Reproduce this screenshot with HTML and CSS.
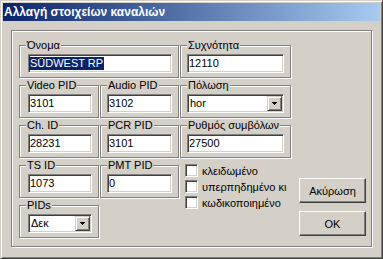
FILE: index.html
```html
<!DOCTYPE html>
<html lang="el">
<head>
    <meta charset="UTF-8">
    <title>Αλλαγή στοιχείων καναλιών</title>
    <link rel="stylesheet" href="styles.css">
</head>
<body>
    <div class="window">
        <div class="titlebar">Αλλαγή στοιχείων καναλιών</div>
        <div class="frame">
            <div class="fields">
                <div class="group lead wide">
                    <span class="legend">Όνομα</span>
                    <div class="edit"><span class="sel">SÜDWEST RP</span></div>
                </div>
                <div class="group">
                    <span class="legend">Συχνότητα</span>
                    <div class="edit">12110</div>
                </div>

                <div class="group lead">
                    <span class="legend">Video PID</span>
                    <div class="edit">3101</div>
                </div>
                <div class="group">
                    <span class="legend">Audio PID</span>
                    <div class="edit">3102</div>
                </div>
                <div class="group">
                    <span class="legend">Πόλωση</span>
                    <div class="combo">
                        <span class="value">hor</span>
                        <span class="drop"><svg width="5" height="3" viewBox="0 0 5 3" shape-rendering="crispEdges"><rect x="0" y="0" width="5" height="1"/><rect x="1" y="1" width="3" height="1"/><rect x="2" y="2" width="1" height="1"/></svg></span>
                    </div>
                </div>

                <div class="group lead">
                    <span class="legend">Ch. ID</span>
                    <div class="edit">28231</div>
                </div>
                <div class="group">
                    <span class="legend">PCR PID</span>
                    <div class="edit">3101</div>
                </div>
                <div class="group">
                    <span class="legend">Ρυθμός συμβόλων</span>
                    <div class="edit">27500</div>
                </div>

                <div class="group lead">
                    <span class="legend">TS ID</span>
                    <div class="edit">1073</div>
                </div>
                <div class="group">
                    <span class="legend">PMT PID</span>
                    <div class="edit">0</div>
                </div>
                <div class="checks">
                    <label class="check"><span class="box"></span>κλειδωμένο</label>
                    <label class="check"><span class="box"></span>υπερπηδημένο κι</label>
                    <label class="check"><span class="box"></span>κωδικοποιημένο</label>
                </div>

                <div class="group lead">
                    <span class="legend">PIDs</span>
                    <div class="combo">
                        <span class="value">Δεκ</span>
                        <span class="drop"><svg width="5" height="3" viewBox="0 0 5 3" shape-rendering="crispEdges"><rect x="0" y="0" width="5" height="1"/><rect x="1" y="1" width="3" height="1"/><rect x="2" y="2" width="1" height="1"/></svg></span>
                    </div>
                </div>
            </div>

            <div class="actions">
                <button class="btn">Ακύρωση</button>
                <button class="btn">OK</button>
            </div>
        </div>
    </div>
</body>
</html>
```

FILE: styles.css
```css
body {
    margin: 0;
    font-family: "Liberation Sans", Arial, sans-serif;
    font-size: 11px;
    color: #000;
    background: #d4d0c8;
}

.window {
    width: 383px;
    height: 259px;
    box-sizing: border-box;
    padding: 2px;
    border: 1px solid;
    border-color: #d4d0c8 #404040 #404040 #d4d0c8;
    box-shadow: inset 1px 1px #fff, inset -1px -1px #808080;
    background: #d4d0c8;
}

.titlebar {
    height: 18px;
    line-height: 18px;
    padding-left: 1px;
    font-size: 12px;
    font-weight: bold;
    color: #fff;
    background: linear-gradient(to right, #0a246a, #a6caf0);
}

/* etched frame around everything */
.frame {
    display: flex;
    width: 361px;
    height: 217px;
    box-sizing: border-box;
    margin: 9px 0 0 8px;
    padding: 14px 0 0 7px;
    border: 1px solid #808080;
    box-shadow: inset 1px 1px #fff, 1px 1px #fff;
}

.fields {
    display: grid;
    grid-template-columns: 80px 79px 111px;
    grid-template-rows: repeat(5, 33px);
    column-gap: 1px;
    row-gap: 7px;
    align-self: flex-start;
}

.group {
    position: relative;
    padding: 8px 6px 0;
    border: 1px solid #808080;
    box-shadow: inset 1px 1px #fff, 1px 1px #fff;
}

.group.lead {
    padding-left: 8px;
}

.group.wide {
    grid-column: span 2;
}

.legend {
    position: absolute;
    top: -7px;
    left: 6px;
    padding: 0 1px;
    line-height: 13px;
    white-space: nowrap;
    background: #d4d0c8;
}

/* sunken edit box */
.edit,
.combo {
    height: 19px;
    box-sizing: border-box;
    border: 1px solid;
    border-color: #808080 #fff #fff #808080;
    box-shadow: inset 1px 1px #404040, inset -1px -1px #d4d0c8;
    background: #fff;
    white-space: nowrap;
    overflow: hidden;
}

.edit {
    padding: 0 1px;
    line-height: 17px;
}

.sel {
    display: inline-block;
    margin-left: -1px;
    padding: 0 1px;
    line-height: 13px;
    color: #fff;
    background: #0a246a;
}

.combo {
    display: flex;
    padding: 1px;
}

.combo .value {
    flex: 1;
    padding-left: 1px;
    line-height: 15px;
}

.drop {
    display: flex;
    align-items: center;
    justify-content: center;
    width: 15px;
    height: 15px;
    box-sizing: border-box;
    border: 1px solid;
    border-color: #d4d0c8 #404040 #404040 #d4d0c8;
    box-shadow: inset 1px 1px #fff, inset -1px -1px #808080;
    background: #d4d0c8;
}

.checks {
    grid-column: 3;
    grid-row: 4 / span 2;
    display: flex;
    flex-direction: column;
    gap: 3px;
    margin-top: -1px;
    padding-left: 5px;
    overflow: hidden;
}

.check {
    display: flex;
    align-items: center;
    gap: 4px;
    height: 13px;
    white-space: nowrap;
}

.box {
    flex: none;
    width: 13px;
    height: 13px;
    box-sizing: border-box;
    border: 1px solid;
    border-color: #808080 #fff #fff #808080;
    box-shadow: inset 1px 1px #404040, inset -1px -1px #d4d0c8;
    background: #fff;
}

.actions {
    display: flex;
    flex-direction: column;
    gap: 8px;
    margin: 133px 0 0 8px;
}

.btn {
    width: 67px;
    height: 25px;
    box-sizing: border-box;
    padding: 0;
    font: inherit;
    color: #000;
    border: 1px solid;
    border-color: #fff #404040 #404040 #fff;
    box-shadow: inset -1px -1px #808080;
    background: #d4d0c8;
}
```
